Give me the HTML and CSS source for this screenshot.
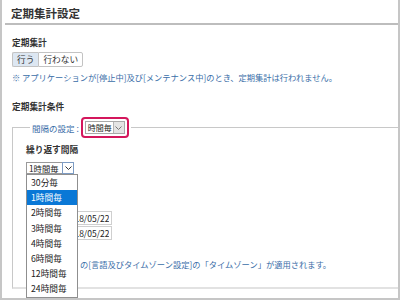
FILE: index.html
```html
<!DOCTYPE html>
<html lang="ja">
<head>
  <meta charset="UTF-8">
  <title>定期集計設定</title>
  <link rel="stylesheet" href="styles.css">
</head>
<body>
  <div class="frame">
    <h1 class="page-title">定期集計設定</h1>

    <div class="content">
      <!-- 定期集計 on/off -->
      <h2 class="label">定期集計</h2>
      <div class="toggle">
        <button class="on">行う</button><button>行わない</button>
      </div>
      <p class="note">※ アプリケーションが[停止中]及び[メンテナンス中]のとき、定期集計は行われません。</p>

      <!-- 条件 -->
      <h2 class="label label-cond">定期集計条件</h2>
      <fieldset class="cond">
        <legend>
          <span class="legend-text">間隔の設定 :</span>
          <span class="hl">
            <span class="select">時間毎<span class="arrow"><svg width="7" height="4" viewBox="0 0 7 4"><path d="M0.5 0.5L3.5 3.5L6.5 0.5" fill="none" stroke="#777" stroke-width="1"/></svg></span></span>
          </span>
        </legend>

        <h3 class="sub">繰り返す間隔</h3>
        <div class="drop-wrap">
          <span class="select select-open">1時間毎<span class="arrow"><svg width="7" height="4" viewBox="0 0 7 4"><path d="M0.5 0.5L3.5 3.5L6.5 0.5" fill="none" stroke="#333" stroke-width="1"/></svg></span></span>
          <ul class="dropdown">
            <li>30分毎</li>
            <li class="sel">1時間毎</li>
            <li>2時間毎</li>
            <li>3時間毎</li>
            <li>4時間毎</li>
            <li>6時間毎</li>
            <li>12時間毎</li>
            <li>24時間毎</li>
          </ul>
        </div>

        <div class="dates">
          <input type="text" value="2018/05/22">
          <input type="text" value="2018/05/22">
        </div>

        <p class="note note-tz">の[言語及びタイムゾーン設定]の「タイムゾーン」が適用されます。</p>
      </fieldset>
    </div>
  </div>
</body>
</html>
```

FILE: styles.css
```css
body {
  margin: 0;
  font-family: "Noto Sans CJK JP", "Noto Sans", sans-serif;
  color: #333;
  background: #fff;
}

.frame {
  width: 400px;
  height: 300px;
  box-sizing: border-box;
  border: 2px solid #c6c6c6;
  border-top: none;
  overflow: hidden;
}

.page-title {
  margin: 0 0 0 3px;
  padding: 3px 0 0 6px;
  font-size: 11.5px;
  line-height: 20px;
  font-weight: bold;
  border-bottom: 2px solid #bdbdbd;
}

.content {
  padding-left: 10px;
}

.label {
  margin: 12px 0 0;
  font-size: 8.7px;
  line-height: 12px;
  font-weight: bold;
}

.label-cond {
  margin-top: 18px;
}

.toggle {
  margin-top: 3px;
  display: flex;
}

.toggle button {
  height: 15px;
  padding: 0 4px;
  margin: 0;
  font-family: inherit;
  font-size: 8.7px;
  line-height: 13px;
  color: #333;
  background: #fff;
  border: 1px solid #c3c3c3;
  border-radius: 0 2px 2px 0;
}

.toggle button.on {
  background: #dde7f2;
  border-right: none;
  border-radius: 2px 0 0 2px;
}

.note {
  margin: 4px 0 0;
  font-size: 8.25px;
  line-height: 12px;
  color: #3a6ea8;
  white-space: nowrap;
}

.cond {
  margin: 4px -12px 0 0;
  padding: 6px 0 17px 13px;
  border: 1px solid #c8c8c8;
  border-bottom: 2px solid #e2e2e2;
  border-right: none;
}

.cond legend {
  margin-left: 4px;
  padding: 0 2px;
  display: flex;
  align-items: center;
}

.legend-text {
  font-size: 8.5px;
  color: #3a6ea8;
  margin-right: 2px;
}

.hl {
  display: inline-flex;
  padding: 2px;
  border: 2px solid #d4175c;
  border-radius: 4px;
}

.select {
  display: inline-flex;
  align-items: stretch;
  box-sizing: border-box;
  height: 13px;
  width: 40px;
  padding-left: 2px;
  font-size: 8px;
  line-height: 11px;
  white-space: nowrap;
  color: #222;
  background: #fff;
  border: 1px solid #a9a9a9;
}

.select .arrow {
  margin-left: auto;
  flex: 0 0 10px;
  display: flex;
  align-items: center;
  justify-content: center;
  background: #e4e4e4;
  border-left: 1px solid #b5b5b5;
}

.sub {
  margin: 0;
  font-size: 8.7px;
  line-height: 12px;
  font-weight: bold;
}

.drop-wrap {
  position: relative;
  display: flex;
  margin-top: 6px;
  width: 48px;
}

.select-open {
  width: 48px;
  height: 12px;
  line-height: 10px;
  font-size: 8.3px;
  border-color: #9a9a9a;
}

.select-open .arrow {
  background: #fff;
  border: 1px solid #7d9cc4;
  margin: -1px -1px -1px auto;
}

.dropdown {
  position: absolute;
  top: 100%;
  left: 0;
  z-index: 2;
  width: 52px;
  margin: 0;
  padding: 0;
  list-style: none;
  background: #fff;
  border: 1px solid #8f8f8f;
  box-sizing: border-box;
}

.dropdown li {
  height: 15.2px;
  padding-left: 4px;
  font-size: 8.7px;
  line-height: 15px;
  color: #222;
}

.dropdown li.sel {
  background: #0a78d6;
  color: #fff;
}

.dates {
  display: flex;
  flex-direction: column;
  align-items: flex-start;
  gap: 1px;
  margin: 37px 0 0 36px;
}

.dates input {
  width: 50px;
  height: 14px;
  box-sizing: border-box;
  margin: 0;
  padding: 0 2px;
  font-family: inherit;
  font-size: 8.5px;
  color: #222;
  border: 1px solid #cfcfcf;
  text-align: right;
}

.note-tz {
  margin-top: 18px;
  padding-left: 54px;
}
```
